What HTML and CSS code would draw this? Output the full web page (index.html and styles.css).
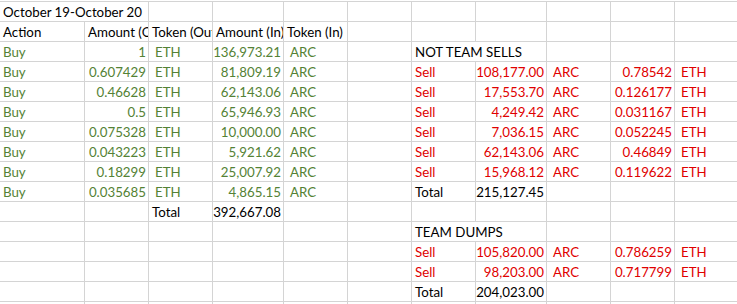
FILE: index.html
```html
<!DOCTYPE html>
<html>
<head>
<meta charset="utf-8">
<link rel="stylesheet" href="styles.css">
</head>
<body>
<div class="sheet">
  <!-- row 1 -->
  <div class="c s2">October 19-October 20</div><div class="c"></div><div class="c"></div><div class="c"></div><div class="c"></div><div class="c"></div><div class="c"></div><div class="c"></div><div class="c"></div><div class="c"></div>
  <!-- row 2 -->
  <div class="c">Action</div><div class="c">Amount (Out)</div><div class="c">Token (Out)</div><div class="c">Amount (In)</div><div class="c">Token (In)</div><div class="c"></div><div class="c"></div><div class="c"></div><div class="c"></div><div class="c"></div><div class="c"></div>
  <!-- row 3 -->
  <div class="c g">Buy</div><div class="c g n">1</div><div class="c g tk">ETH</div><div class="c g n">136,973.21</div><div class="c g tk">ARC</div><div class="c"></div><div class="c s2">NOT TEAM SELLS</div><div class="c"></div><div class="c"></div><div class="c"></div>
  <!-- row 4 -->
  <div class="c g">Buy</div><div class="c g n">0.607429</div><div class="c g tk">ETH</div><div class="c g n">81,809.19</div><div class="c g tk">ARC</div><div class="c"></div><div class="c r">Sell</div><div class="c r n">108,177.00</div><div class="c r tk">ARC</div><div class="c r n">0.78542</div><div class="c r tk">ETH</div>
  <!-- row 5 -->
  <div class="c g">Buy</div><div class="c g n">0.46628</div><div class="c g tk">ETH</div><div class="c g n">62,143.06</div><div class="c g tk">ARC</div><div class="c"></div><div class="c r">Sell</div><div class="c r n">17,553.70</div><div class="c r tk">ARC</div><div class="c r n">0.126177</div><div class="c r tk">ETH</div>
  <!-- row 6 -->
  <div class="c g">Buy</div><div class="c g n">0.5</div><div class="c g tk">ETH</div><div class="c g n">65,946.93</div><div class="c g tk">ARC</div><div class="c"></div><div class="c r">Sell</div><div class="c r n">4,249.42</div><div class="c r tk">ARC</div><div class="c r n">0.031167</div><div class="c r tk">ETH</div>
  <!-- row 7 -->
  <div class="c g">Buy</div><div class="c g n">0.075328</div><div class="c g tk">ETH</div><div class="c g n">10,000.00</div><div class="c g tk">ARC</div><div class="c"></div><div class="c r">Sell</div><div class="c r n">7,036.15</div><div class="c r tk">ARC</div><div class="c r n">0.052245</div><div class="c r tk">ETH</div>
  <!-- row 8 -->
  <div class="c g">Buy</div><div class="c g n">0.043223</div><div class="c g tk">ETH</div><div class="c g n">5,921.62</div><div class="c g tk">ARC</div><div class="c"></div><div class="c r">Sell</div><div class="c r n">62,143.06</div><div class="c r tk">ARC</div><div class="c r n">0.46849</div><div class="c r tk">ETH</div>
  <!-- row 9 -->
  <div class="c g">Buy</div><div class="c g n">0.18299</div><div class="c g tk">ETH</div><div class="c g n">25,007.92</div><div class="c g tk">ARC</div><div class="c"></div><div class="c r">Sell</div><div class="c r n">15,968.12</div><div class="c r tk">ARC</div><div class="c r n">0.119622</div><div class="c r tk">ETH</div>
  <!-- row 10 -->
  <div class="c g">Buy</div><div class="c g n">0.035685</div><div class="c g tk">ETH</div><div class="c g n">4,865.15</div><div class="c g tk">ARC</div><div class="c"></div><div class="c">Total</div><div class="c n">215,127.45</div><div class="c"></div><div class="c"></div><div class="c"></div>
  <!-- row 11 -->
  <div class="c"></div><div class="c"></div><div class="c">Total</div><div class="c n">392,667.08</div><div class="c"></div><div class="c"></div><div class="c"></div><div class="c"></div><div class="c"></div><div class="c"></div><div class="c"></div>
  <!-- row 12 -->
  <div class="c"></div><div class="c"></div><div class="c"></div><div class="c"></div><div class="c"></div><div class="c"></div><div class="c s2">TEAM DUMPS</div><div class="c"></div><div class="c"></div><div class="c"></div>
  <!-- row 13 -->
  <div class="c"></div><div class="c"></div><div class="c"></div><div class="c"></div><div class="c"></div><div class="c"></div><div class="c r">Sell</div><div class="c r n">105,820.00</div><div class="c r tk">ARC</div><div class="c r n">0.786259</div><div class="c r tk">ETH</div>
  <!-- row 14 -->
  <div class="c"></div><div class="c"></div><div class="c"></div><div class="c"></div><div class="c"></div><div class="c"></div><div class="c r">Sell</div><div class="c r n">98,203.00</div><div class="c r tk">ARC</div><div class="c r n">0.717799</div><div class="c r tk">ETH</div>
  <!-- row 15 -->
  <div class="c"></div><div class="c"></div><div class="c"></div><div class="c"></div><div class="c"></div><div class="c"></div><div class="c">Total</div><div class="c n">204,023.00</div><div class="c"></div><div class="c"></div><div class="c"></div>
  <!-- row 16 -->
  <div class="c"></div><div class="c"></div><div class="c"></div><div class="c"></div><div class="c"></div><div class="c"></div><div class="c"></div><div class="c"></div><div class="c"></div><div class="c"></div><div class="c"></div>
</div>
</body>
</html>
```

FILE: styles.css
```css
html, body {
  margin: 0;
  padding: 0;
  background: #ffffff;
  overflow: hidden;
}

body {
  width: 737px;
  height: 304px;
}

.sheet {
  margin-top: 1px;
  display: grid;
  grid-template-columns: 85px 64px 64px 71px 64px 64px 64px 71px 64px 64px 64px;
  grid-auto-rows: 20px;
  border-top: 1px solid #d4d4d4;
  width: 739px;
  height: 303px;
  overflow: hidden;
  font-family: Lato, "Open Sans", sans-serif;
  font-size: 13.3px;
  color: #000000;
}

.c {
  box-sizing: border-box;
  border-right: 1px solid #d4d4d4;
  border-bottom: 1px solid #d4d4d4;
  padding: 0 2px 0 3px;
  line-height: 21px;
  white-space: nowrap;
  overflow: hidden;
}

.s2 {
  grid-column: span 2;
}

.n {
  text-align: right;
  padding-left: 0;
}

.tk {
  padding-left: 6px;
}

.g {
  color: #548235;
}

.r {
  color: #e00000;
}
```
